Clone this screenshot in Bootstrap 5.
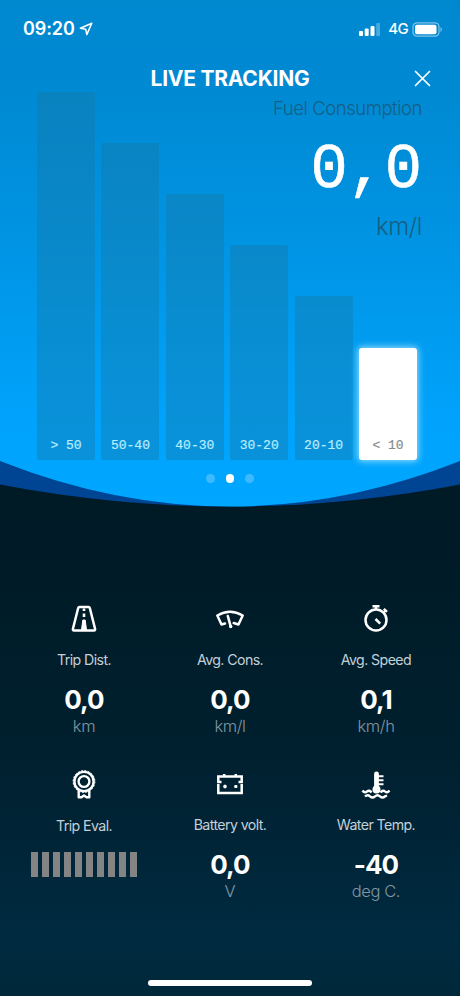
<!DOCTYPE html>
<html lang="en">
<head>
<meta charset="utf-8">
<meta name="viewport" content="width=device-width, initial-scale=1">
<title>Live Tracking</title>
<link href="https://cdn.jsdelivr.net/npm/bootstrap@5.3.0/dist/css/bootstrap.min.css" rel="stylesheet">
<style>
body{margin:0;background:#001b27;font-family:Inter,"Liberation Sans",sans-serif;color:#fff}
.screen{width:460px;height:996px;overflow:hidden;background:linear-gradient(#001a26 0,#001a26 52%,#00202f 76%,#002a40 94%,#00283a 100%)}
.hero{height:508px}
.hero-bg{z-index:0}
.layer{z-index:1}
.status{height:58px;padding:0 18px 0 23px}
.clock{font-size:18px;font-weight:600;line-height:20px;letter-spacing:-.1px}
.net{font-size:15px;line-height:18px;font-weight:500;letter-spacing:-.6px}
.titlebar{height:42px}
.titlebar h1{font-size:21px;font-weight:700;letter-spacing:-.25px;line-height:24px;padding-top:9px}
.close-x{right:29px;top:12px;line-height:0}
.plot{height:368px;margin:-8px 43px 0 37px}
.bars{gap:6.3px}
.bar{flex:1 1 0;background:rgba(24,118,160,.38);border-radius:2px;font:13px/16px "Liberation Mono",monospace;-webkit-text-stroke:.2px;padding-bottom:6px;color:#b9ecff}
.bar.on{background:#fff;color:#8b8b8b;box-shadow:0 0 7px 1px rgba(190,240,255,.8);border-radius:3px}
.h1b{height:368px}.h2b{height:317px}.h3b{height:266px}.h4b{height:215px}.h5b{height:164px}.h6b{height:112px}
.readout{right:-5px;top:5px;color:#165f82}
.cap{font-size:18.5px;font-weight:300;line-height:22px;letter-spacing:-.45px}
.big{font:62px/70px "Liberation Mono",monospace;-webkit-text-stroke:.6px #fff;color:#fff;transform:scaleY(1.01);margin-top:17px;margin-right:0}
.big-unit{font-size:24px;font-weight:300;line-height:28px;margin-top:7px;letter-spacing:-.4px}
.dots{gap:11px;margin-top:14px}
.dots span{width:8.5px;height:8.5px;border-radius:50%;background:#3dbaff}
.dots span.on{background:#fff}
.stats{padding:94px 11px 0}
.cell{height:165.5px}
.ico{height:32px}
.name{font-size:14.2px;line-height:18px;margin-top:16.5px;color:#c3d0d8;letter-spacing:-.6px}
.name.low{margin-top:17.5px}
.val{font-size:26px;font-weight:700;line-height:32px;margin-top:15px;letter-spacing:-.9px}
.unit{font-size:16.5px;font-weight:300;line-height:20px;color:#8296a2;letter-spacing:-.4px}
.lvl{gap:3.65px;margin-top:17px}
.lvl span{width:7.4px;height:25px;background:#858484}
.home{width:164px;height:6px;bottom:10px;left:148px}
</style>
</head>
<body>
<main class="screen position-relative">
<section class="hero position-relative">
<svg class="hero-bg position-absolute top-0 start-0" width="460" height="508" viewBox="0 0 460 508">
<defs><linearGradient id="sky" x1="0" y1="0" x2="0" y2="506" gradientUnits="userSpaceOnUse"><stop offset="0" stop-color="#0088cf"/><stop offset=".2" stop-color="#008ad4"/><stop offset=".5" stop-color="#0095e5"/><stop offset=".82" stop-color="#00a2fb"/><stop offset="1" stop-color="#00a7ff"/></linearGradient></defs>
<path d="M0 0H460V484.500Q230 528.500 0 484.500Z" fill="#004593"/>
<path d="M0 0H460V461Q230 552 0 461Z" fill="url(#sky)"/>
</svg>
<div class="layer position-relative">
<header class="status d-flex justify-content-between align-items-center">
<div class="d-flex align-items-center gap-1"><span class="clock">09:20</span>
<svg width="14" height="14" viewBox="0 0 14 14" fill="none" stroke="#fff" stroke-width="1.500" stroke-linejoin="round"><path d="M12.800 1.200 1.300 6.200 6.700 7.200 7.800 12.600Z"/></svg></div>
<div class="d-flex align-items-center">
<svg width="21" height="13" viewBox="0 0 21 13" fill="#fff"><rect y="8" width="4" height="5" rx="1"/><rect x="5.700" y="5.500" width="4" height="7.500" rx="1"/><rect x="11.500" y="3" width="4" height="10" rx="1"/><rect x="17.200" width="4" height="13" rx="1" opacity=".28"/></svg>
<span class="net ps-1 ms-1">4G</span>
<svg class="ms-1" width="30" height="15" viewBox="0 0 30 15"><rect x="1" y=".8" width="26" height="13.400" rx="4" fill="none" stroke="#fff" stroke-opacity=".5" stroke-width="1.200"/><rect x="3" y="2.800" width="21.500" height="9.400" rx="2" fill="#fff"/><path d="M28.500 5q1.400.7 1.400 2.500t-1.400 2.500Z" fill="#fff" opacity=".5"/></svg>
</div>
</header>
<div class="titlebar position-relative text-center">
<h1 class="m-0">LIVE TRACKING</h1>
<div class="close-x position-absolute"><svg width="17" height="17" viewBox="0 0 17 17" stroke="#fff" stroke-width="1.700" stroke-linecap="round"><path d="M1.500 1.500 15.500 15.500M15.500 1.500 1.500 15.500"/></svg></div>
</div>
<div class="plot position-relative">
<div class="bars d-flex align-items-end h-100">
<div class="bar h1b d-flex align-items-end justify-content-center">&gt; 50</div>
<div class="bar h2b d-flex align-items-end justify-content-center">50-40</div>
<div class="bar h3b d-flex align-items-end justify-content-center">40-30</div>
<div class="bar h4b d-flex align-items-end justify-content-center">30-20</div>
<div class="bar h5b d-flex align-items-end justify-content-center">20-10</div>
<div class="bar on h6b d-flex align-items-end justify-content-center">&lt; 10</div>
</div>
<div class="readout position-absolute text-end">
<div class="cap">Fuel Consumption</div><div class="big">0,0</div><div class="big-unit">km/l</div>
</div>
</div>
<div class="dots d-flex justify-content-center"><span></span><span class="on"></span><span></span></div>
</div>
</section>
<section class="stats">
<div class="row g-0 text-center">
<div class="col-4 cell">
<div class="ico d-flex align-items-center justify-content-center"><svg width="28" height="30" viewBox="0 0 28 30" fill="none" stroke="#fff" stroke-width="2.500" stroke-linejoin="round"><path d="M9.500 4H18.500Q19.500 4 19.800 5L25 25.500Q25.500 27.500 24 27.500H4Q2.500 27.500 3 25.500L8.200 5Q8.500 4 9.500 4Z"/><path d="M14 5.500V8M14 10.500V14" stroke-width="2.600"/><path d="M12.800 17H15.200L16.500 27H11.500Z" fill="#fff" stroke-width="1"/></svg></div>
<div class="name">Trip Dist.</div><div class="val">0,0</div><div class="unit">km</div></div>
<div class="col-4 cell">
<div class="ico d-flex align-items-center justify-content-center"><svg width="30" height="30" viewBox="0 0 30 30" fill="none" stroke="#fff" stroke-width="2.500" stroke-linejoin="round" stroke-linecap="round"><path d="M10 20.500 6.500 21.500 2.300 12.500Q15 5 27.700 12.500L23.500 21.500 18.700 20"/><path d="M12.800 13 15.700 23.500" stroke-width="2.600"/><circle cx="15.700" cy="23.500" r="1.700" fill="#fff" stroke="none"/></svg></div>
<div class="name">Avg. Cons.</div><div class="val">0,0</div><div class="unit">km/l</div></div>
<div class="col-4 cell">
<div class="ico d-flex align-items-center justify-content-center"><svg width="28" height="30" viewBox="0 0 28 30" fill="none" stroke="#fff" stroke-width="2.500"><circle cx="14" cy="17" r="10.500"/><path d="M10.500 3.300H17.500M14 3.500V6.500M21.500 9 23.500 7M21.800 5.800 25 8.900"/><path d="M13.500 16 18.200 20.700"/></svg></div>
<div class="name">Avg. Speed</div><div class="val">0,1</div><div class="unit">km/h</div></div>
<div class="col-4 cell">
<div class="ico d-flex align-items-center justify-content-center"><svg width="28" height="30" viewBox="0 0 28 30" fill="none" stroke="#fff" stroke-width="2.400"><circle cx="14" cy="12.500" r="9.600"/><circle cx="14" cy="12.500" r="10.900" stroke-width="1" stroke-dasharray="2 1.424"/><circle cx="14" cy="12.500" r="5.400"/><path d="M8.700 21.500V28.200H11.500L14 26.500 16.500 28.200H19.300V21.500" stroke-linejoin="round"/></svg></div>
<div class="name low">Trip Eval.</div>
<div class="lvl d-flex justify-content-center"><span></span><span></span><span></span><span></span><span></span><span></span><span></span><span></span><span></span><span></span></div></div>
<div class="col-4 cell">
<div class="ico d-flex align-items-center justify-content-center"><svg width="28" height="30" viewBox="0 0 28 30" fill="none" stroke="#fff" stroke-width="2.500"><path d="M5.500 13H2.300V7.600H25.700V13H22.500M2.300 15V24H25.700V15M8.200 8V5M19.800 8V5"/><path d="M7.200 17.500H10.800M9 15.700V19.300M18.200 17.500H21.400M19.800 16V19" stroke-width="2.200"/></svg></div>
<div class="name">Battery volt.</div><div class="val">0,0</div><div class="unit">V</div></div>
<div class="col-4 cell">
<div class="ico d-flex align-items-center justify-content-center"><svg width="30" height="30" viewBox="0 0 30 30" fill="none" stroke="#fff" stroke-width="2"><path d="M15.500 5V20" stroke-width="4.800" stroke-linecap="round"/><circle cx="15.500" cy="20.500" r="4" fill="#fff" stroke="none"/><path d="M17 7.300H22.500M17 11.300H22.500M17 15.300H22.500"/><path d="M1.500 21.500Q3.500 24.500 6 22.500T10.500 23.500M19.500 23.500Q22 20.500 24 22.500T28.500 21.500M4 27.500Q6.500 25 9 27.300T14 27.300 19 27.300 24 27.300L26 26.500" stroke-width="2.400"/></svg></div>
<div class="name">Water Temp.</div><div class="val">-40</div><div class="unit">deg C.</div></div>
</div>
</section>
<div class="home position-absolute bg-white rounded-pill"></div>
</main>
<script src="https://cdn.jsdelivr.net/npm/bootstrap@5.3.0/dist/js/bootstrap.bundle.min.js"></script>
</body>
</html>
